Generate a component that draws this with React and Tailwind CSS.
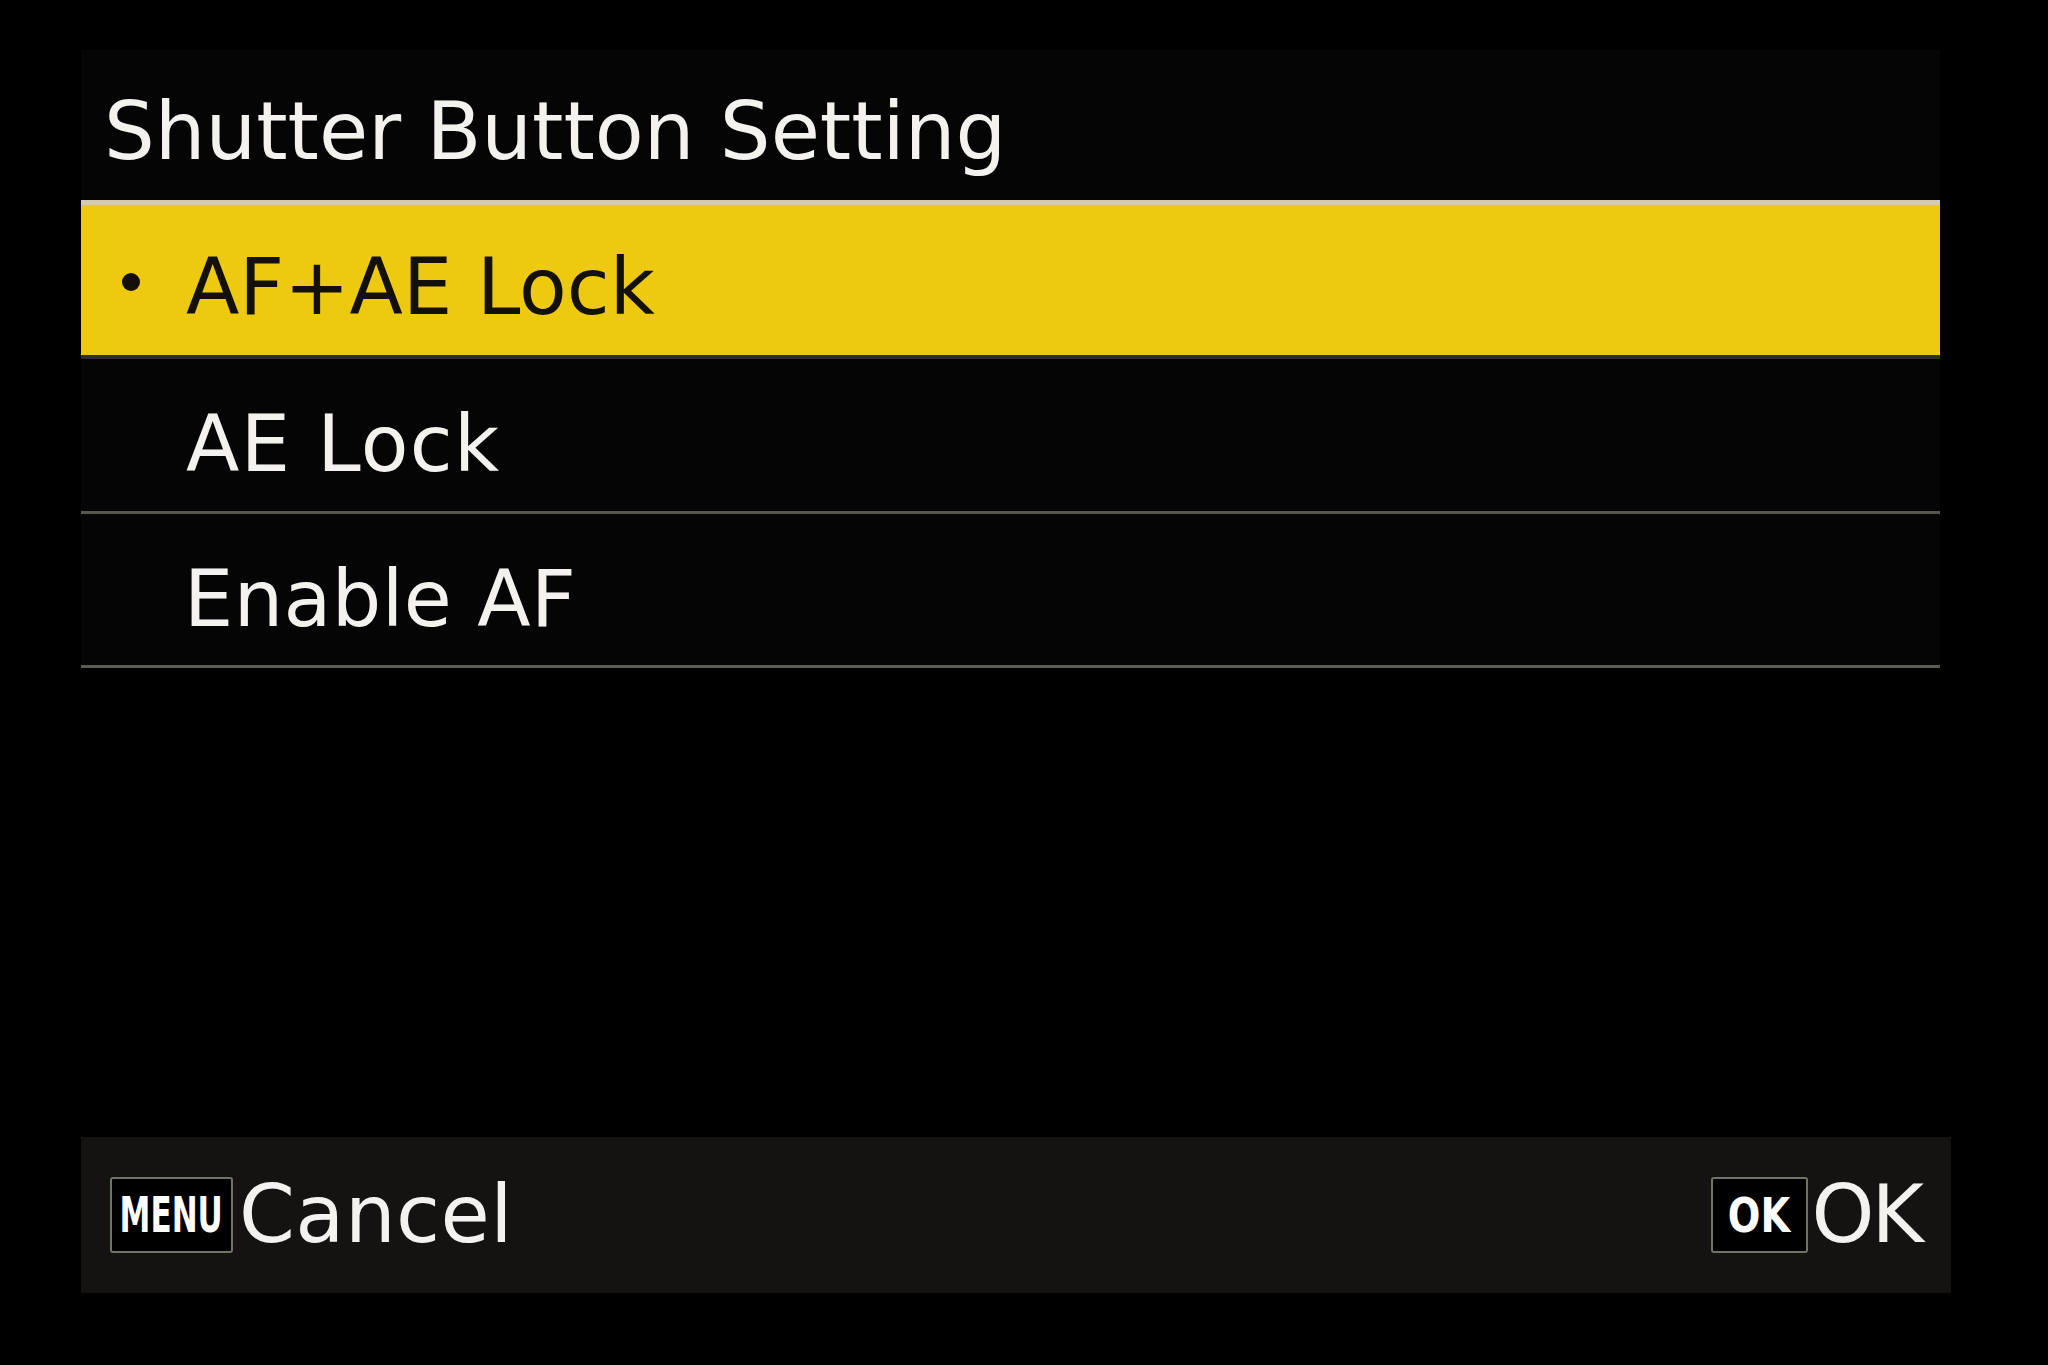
export default function App() {
  const font = { fontFamily: '"DejaVu Sans", "Liberation Sans", sans-serif' };
  return (
    <div
      className="w-[2048px] h-[1365px] bg-black flex flex-col pl-[81px] pt-[50px] pb-[72px] overflow-hidden"
      style={font}
    >
      <div className="w-[1859px] bg-[#050505] flex flex-col">
        <div className="h-[150px] flex items-center pl-[23px] pt-[14px] text-[80px] leading-none text-[#f4f2ee]">
          Shutter Button Setting
        </div>
        <div className="h-[155px] bg-[#edc90f] border-t-[5px] border-[#d3cbb0] flex items-center pl-[41px] pt-[14px]">
          <span className="w-[18px] h-[18px] rounded-full bg-[#141008] mr-[46px] -mt-[10px]" />
          <span className="text-[78px] leading-none text-[#121008]">AF+AE Lock</span>
        </div>
        <div className="h-[4px] bg-[#2e2e2c]" />
        <div className="h-[152px] flex items-center pl-[105px] pt-[18px]">
          <span className="text-[78px] leading-none text-[#f4f2ee] tracking-[1.3px]">AE Lock</span>
        </div>
        <div className="h-[3px] bg-[#56574f]" />
        <div className="h-[151px] flex items-center pl-[103px] pt-[18px]">
          <span className="text-[78px] leading-none text-[#f4f2ee] tracking-[0.4px]">Enable AF</span>
        </div>
        <div className="h-[3px] bg-[#5a5b52]" />
      </div>
      <div className="mt-auto w-[1870px] h-[156px] bg-[#141312] flex items-center justify-between pl-[29px] pr-[30px]">
        <div className="flex items-center">
          <div className="w-[123px] h-[76px] border-2 border-[#6f7466] rounded-[3px] bg-black flex items-center justify-center">
            <span className="inline-block text-[50px] font-bold leading-none text-white scale-x-[0.62] whitespace-nowrap">
              MENU
            </span>
          </div>
          <span className="ml-[6px] text-[80px] leading-none text-[#f4f2ee] tracking-[0.5px]">Cancel</span>
        </div>
        <div className="flex items-center">
          <div className="w-[97px] h-[76px] border-2 border-[#6f7466] rounded-[3px] bg-black flex items-center justify-center">
            <span className="inline-block text-[48px] font-bold leading-none text-white scale-x-[0.8] whitespace-nowrap">
              OK
            </span>
          </div>
          <span className="ml-[4px] text-[80px] leading-none text-[#f4f2ee] tracking-[-3px]">OK</span>
        </div>
      </div>
    </div>
  );
}
